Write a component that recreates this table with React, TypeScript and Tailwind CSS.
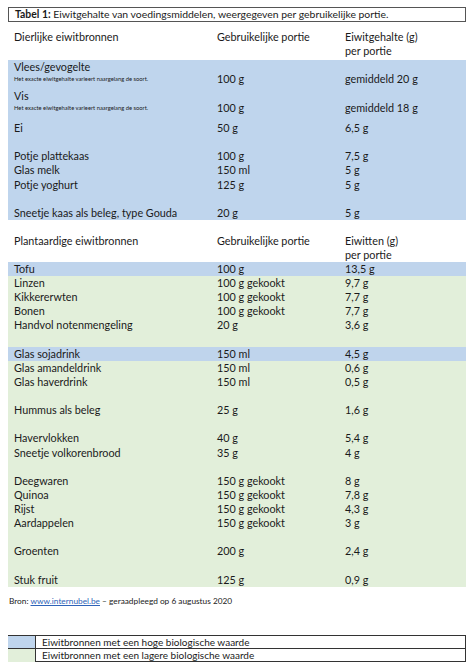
import React from "react";

type Row = [string, string, string] | null;

// rows after the two "with note" blocks, in the blue section
const animalRows: Row[] = [
  ["Ei", "50 g", "6,5 g"],
  null,
  ["Potje plattekaas", "100 g", "7,5 g"],
  ["Glas melk", "150 ml", "5 g"],
  ["Potje yoghurt", "125 g", "5 g"],
  null,
  ["Sneetje kaas als beleg, type Gouda", "20 g", "5 g"],
];

// green section, "blue" marks a high value row
const plantRows: { r: Row; blue?: boolean }[] = [
  { r: ["Tofu", "100 g", "13,5 g"], blue: true },
  { r: ["Linzen", "100 g gekookt", "9,7 g"] },
  { r: ["Kikkererwten", "100 g gekookt", "7,7 g"] },
  { r: ["Bonen", "100 g gekookt", "7,7 g"] },
  { r: ["Handvol notenmengeling", "20 g", "3,6 g"] },
  { r: null },
  { r: ["Glas sojadrink", "150 ml", "4,5 g"], blue: true },
  { r: ["Glas amandeldrink", "150 ml", "0,6 g"] },
  { r: ["Glas haverdrink", "150 ml", "0,5 g"] },
  { r: null },
  { r: ["Hummus als beleg", "25 g", "1,6 g"] },
  { r: null },
  { r: ["Havervlokken", "40 g", "5,4 g"] },
  { r: ["Sneetje volkorenbrood", "35 g", "4 g"] },
  { r: null },
  { r: ["Deegwaren", "150 g gekookt", "8 g"] },
  { r: ["Quinoa", "150 g gekookt", "7,8 g"] },
  { r: ["Rijst", "150 g gekookt", "4,3 g"] },
  { r: ["Aardappelen", "150 g gekookt", "3 g"] },
  { r: null },
  { r: ["Groenten", "200 g", "2,4 g"] },
  { r: null },
  { r: ["Stuk fruit", "125 g", "0,9 g"] },
];

const cols = "grid grid-cols-[203px_128px_1fr]";

function TableRow({ r, className = "" }: { r: Row; className?: string }) {
  return (
    <div className={`${cols} h-[14.14px] items-center leading-[14px] ${className}`}>
      <div className="pl-[6px]">{r ? r[0] : ""}</div>
      <div className="pl-[6px]">{r ? r[1] : ""}</div>
      <div className="pl-[6px]">{r ? r[2] : ""}</div>
    </div>
  );
}

function NoteBlock({ name, portion, value, h }: { name: string; portion: string; value: string; h: string }) {
  return (
    <div className={`${cols} ${h}`}>
      <div className="pl-[6px] flex flex-col">
        <span className="leading-[14px]">{name}</span>
        <span className="text-[5.8px] leading-[9px]">Het exacte eiwitgehalte varieert naargelang de soort.</span>
      </div>
      <div className="pl-[6px] pt-[12px] leading-[14px]">{portion}</div>
      <div className="pl-[6px] pt-[12px] leading-[14px]">{value}</div>
    </div>
  );
}

function Header({ first, third }: { first: string; third: string }) {
  return (
    <div className={`${cols} leading-[14px]`}>
      <div className="pl-[6px]">{first}</div>
      <div className="pl-[6px]">Gebruikelijke portie</div>
      <div className="pl-[6px] flex flex-col">
        <span>{third}</span>
        <span>per portie</span>
      </div>
    </div>
  );
}

export default function App() {
  return (
    <div className="w-[474px] h-[666px] bg-white px-[8px] pt-[7px] font-['Lato','Liberation_Sans',sans-serif] text-[10.8px] text-[#1a1a1a]">
      <div className="h-[15px] border border-[#555] pl-[6px] text-[10.4px] leading-[13px]">
        <span className="font-bold">Tabel 1:</span> Eiwitgehalte van voedingsmiddelen, weergegeven per gebruikelijke portie.
      </div>

      <div className="mt-[8px]">
        <Header first="Dierlijke eiwitbronnen" third="Eiwitgehalte (g)" />
      </div>

      <div className="mt-[2px] bg-[#bfd5ed]">
        <NoteBlock name="Vlees/gevogelte" portion="100 g" value="gemiddeld 20 g" h="h-[29px]" />
        <NoteBlock name="Vis" portion="100 g" value="gemiddeld 18 g" h="h-[32px]" />
        {animalRows.map((r, i) => (
          <TableRow key={i} r={r} />
        ))}
      </div>

      <div className="mt-[14px]">
        <Header first="Plantaardige eiwitbronnen" third="Eiwitten (g)" />
      </div>

      <div className="bg-[#e2efda]">
        {plantRows.map((p, i) => (
          <TableRow key={i} r={p.r} className={p.blue ? "bg-[#bfd4ec]" : ""} />
        ))}
      </div>

      <div className="mt-[9px] text-[8.3px] leading-[10px] pl-[1px]">
        Bron: <span className="text-[#2e63b8] underline">www.internubel.be</span> – geraadpleegd op 6 augustus 2020
      </div>

      <div className="mt-[29px] border-t border-r border-[#333] text-[10px] leading-[12px]">
        <div className="flex h-[13px] border-b border-[#333]">
          <div className="w-[28px] bg-[#bfd5ed] border-r border-[#333]" />
          <div className="pl-[6px]">Eiwitbronnen met een hoge biologische waarde</div>
        </div>
        <div className="flex h-[13px]">
          <div className="w-[28px] bg-[#e2efda] border-r border-[#333]" />
          <div className="pl-[6px] flex-1 border-b border-[#333]">Eiwitbronnen met een lagere biologische waarde</div>
        </div>
      </div>
    </div>
  );
}
